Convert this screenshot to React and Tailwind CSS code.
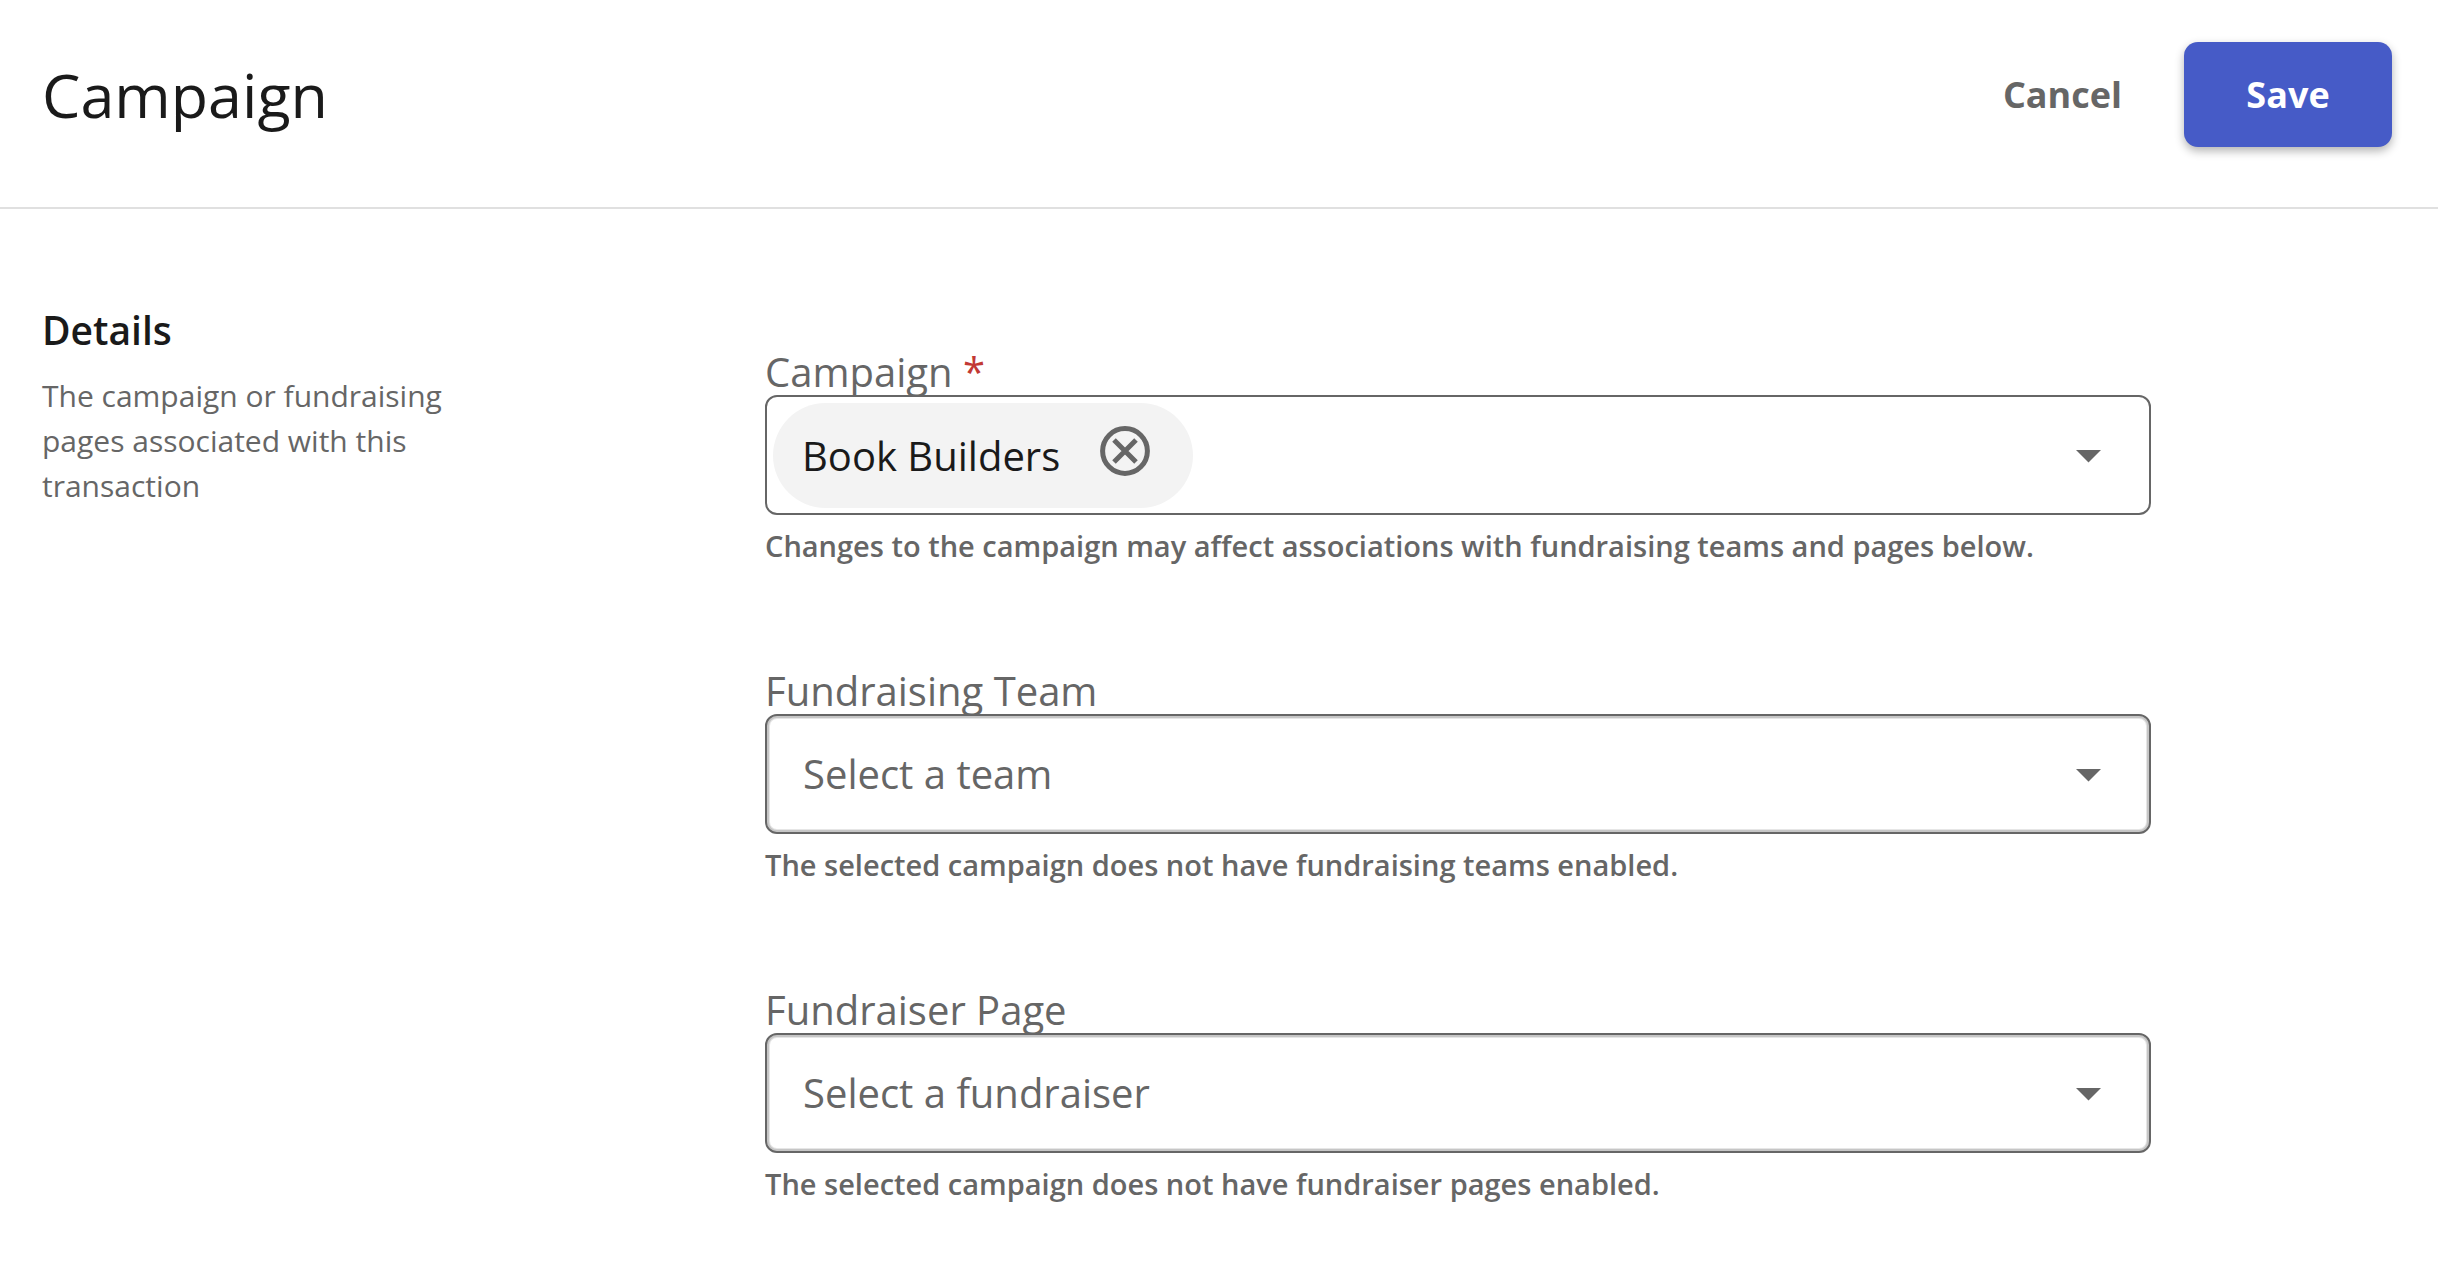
import React, { useState } from "react";

const Caret = () => (
  <svg
    className="pointer-events-none absolute right-[48px] top-[53px] h-[13px] w-[25px] fill-[#666666]"
    viewBox="0 0 25 13"
    aria-hidden="true"
  >
    <path d="M0 0h25L12.5 12.5z" />
  </svg>
);

const RemoveIcon = () => (
  <svg
    className="h-[50px] w-[50px]"
    viewBox="0 0 50 50"
    fill="none"
    stroke="#666666"
    strokeWidth="5"
    aria-hidden="true"
  >
    <circle cx="25" cy="25" r="22.4" />
    <path d="M14 14l22 22M36 14l-22 22" />
  </svg>
);

const Field = ({ id, label, required, hint, children }) => (
  <div className="flex flex-col">
    <label htmlFor={id} className="text-[40px] leading-[46px] font-medium text-[#666666]">
      {label}
      {required && <span className="text-[#c23934]"> *</span>}
    </label>
    {children}
    <p id={`${id}-hint`} className="mt-[11px] text-[29px] leading-[40px] font-semibold text-[#666666]">
      {hint}
    </p>
  </div>
);

const EmptySelect = ({ id, placeholder }) => (
  <div className="relative h-[120px] rounded-[12px] border-2 border-[#666666] shadow-[inset_0_0_0_2px_#c6c6c6,inset_0_0_0_3px_#e6e6e6]">
    <select
      id={id}
      aria-describedby={`${id}-hint`}
      className="h-full w-full appearance-none bg-transparent pl-[36px] pr-[96px] text-[40px] text-[#666666]"
    >
      <option>{placeholder}</option>
    </select>
    <Caret />
  </div>
);

const App = () => {
  const [campaign, setCampaign] = useState("Book Builders");

  return (
    <form
      className="min-h-screen bg-white font-['Open_Sans',sans-serif] text-[#1a1a1a]"
      onSubmit={(e) => e.preventDefault()}
    >
      <header className="flex items-center justify-between border-b-2 border-[#e0e0e0] pl-[42px] pr-[46px] pt-[42px] pb-[60px]">
        <h1 className="text-[61px] leading-[72px]">Campaign</h1>
        <div className="flex items-center gap-[62px] text-[36px] font-bold">
          <button type="button" className="text-[#666666]">
            Cancel
          </button>
          <button
            type="submit"
            className="h-[105px] w-[208px] rounded-[14px] bg-[#465bc7] text-white shadow-[0_4px_10px_rgba(0,0,0,0.3)]"
          >
            Save
          </button>
        </div>
      </header>

      <main className="flex pl-[42px] pr-[287px] pt-[96px] pb-[60px]">
        <section className="w-[723px] shrink-0 pr-[290px]">
          <h2 className="text-[39px] leading-[50px] font-semibold">Details</h2>
          <p className="mt-[18px] text-[30px] leading-[45px] text-[#666666]">
            The campaign or fundraising pages associated with this transaction
          </p>
        </section>

        <div className="flex flex-1 flex-col gap-[102px] pt-[44px]">
          <Field
            id="campaign"
            label="Campaign"
            required
            hint="Changes to the campaign may affect associations with fundraising teams and pages below."
          >
            <div className="relative flex h-[120px] rounded-[12px] border-2 border-[#666666] p-[6px]">
              {campaign && (
                <div className="flex h-[105px] items-center gap-[40px] rounded-full bg-[#f3f3f3] pl-[29px] pr-[43px] text-[40px]">
                  {campaign}
                  <button
                    type="button"
                    aria-label={`Remove ${campaign}`}
                    className="pb-[10px]"
                    onClick={() => setCampaign("")}
                  >
                    <RemoveIcon />
                  </button>
                </div>
              )}
              <select
                id="campaign"
                aria-describedby="campaign-hint"
                className="flex-1 appearance-none bg-transparent"
                value=""
                onChange={(e) => setCampaign(e.target.value)}
              >
                <option value=""></option>
              </select>
              <Caret />
            </div>
          </Field>

          <Field
            id="team"
            label="Fundraising Team"
            hint="The selected campaign does not have fundraising teams enabled."
          >
            <EmptySelect id="team" placeholder="Select a team" />
          </Field>

          <Field
            id="fundraiser"
            label="Fundraiser Page"
            hint="The selected campaign does not have fundraiser pages enabled."
          >
            <EmptySelect id="fundraiser" placeholder="Select a fundraiser" />
          </Field>
        </div>
      </main>
    </form>
  );
};

export default App;
